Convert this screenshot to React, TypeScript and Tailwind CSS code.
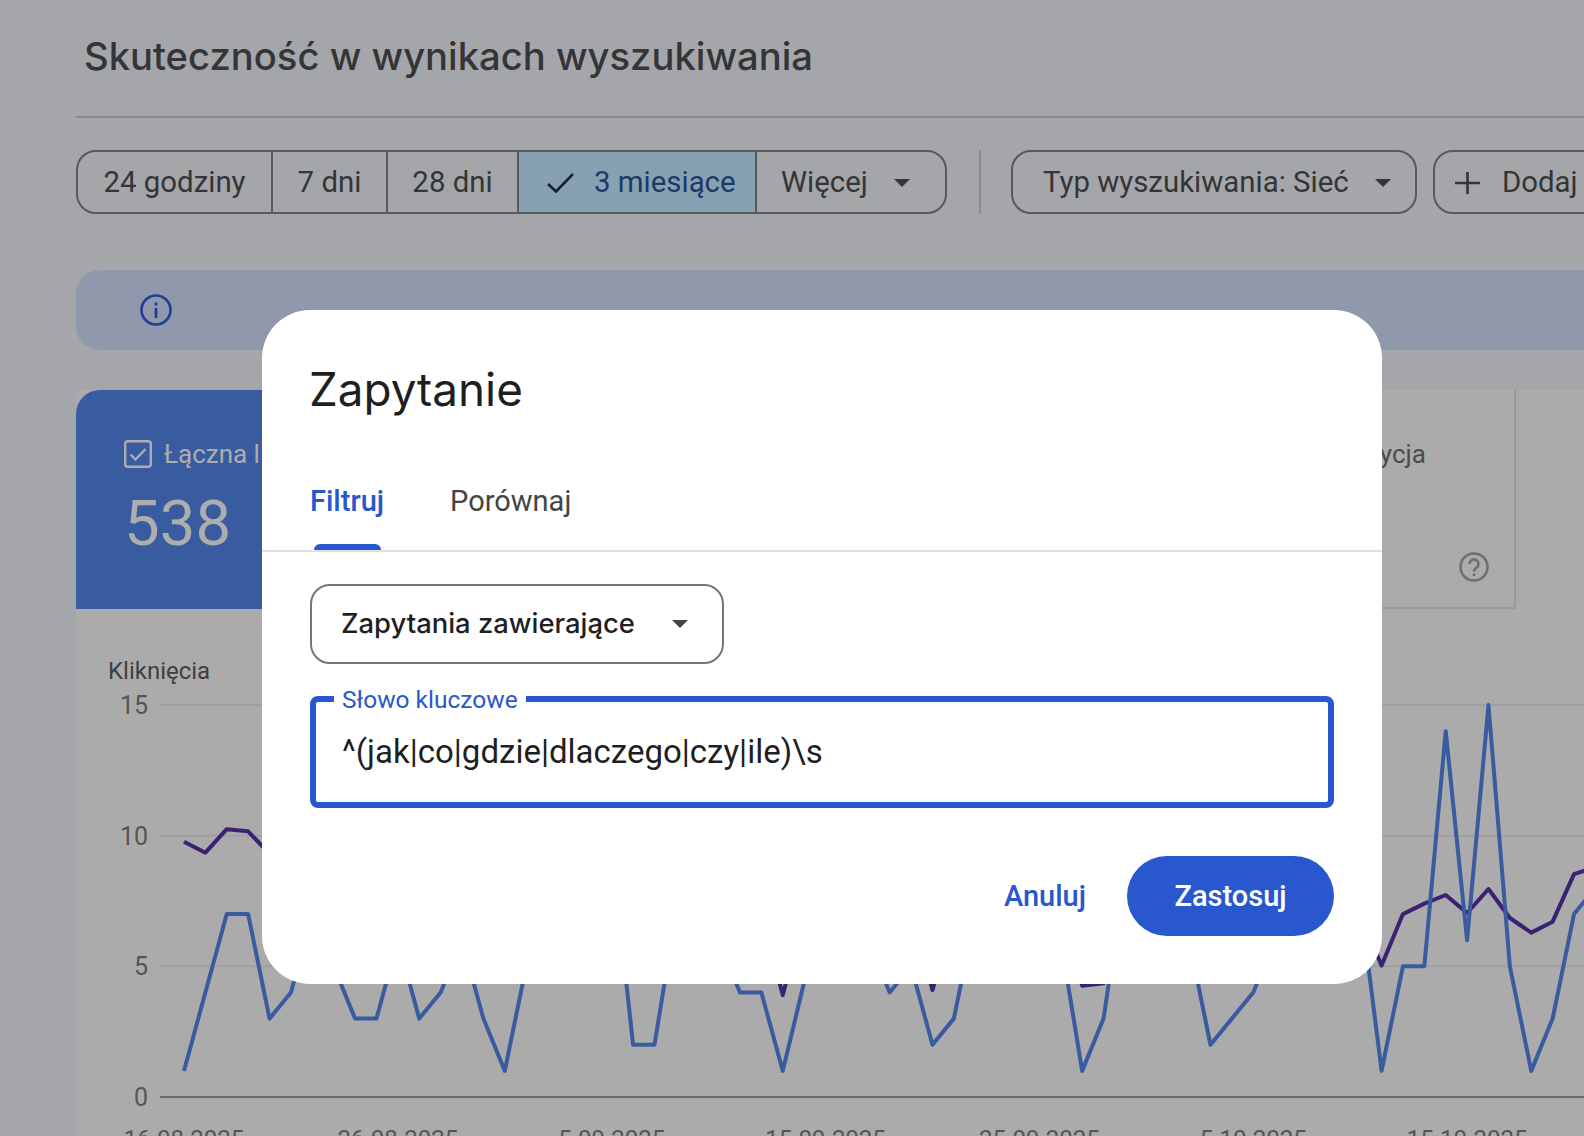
import React from 'react'

const GAP = 21.385
const xAt = (i: number) => 184 + GAP * i
const yAt = (v: number) => 1097 - v * 26.13

const blue = [1, 4, 7, 7, 3, 4, 7, 5, 3, 3, 6, 3, 4, 6, 3, 1, 5, 7, 7, 7, 9.5, 2, 2, 7, 7, 6, 4, 4, 1, 4.4, 7, 7, 6, 4, 5, 2, 3, 7, 7, 7, 7, 6, 1, 3, 8.5, 7, 7, 6, 2, 3, 4, 6, 7, 7, 7, 7.5, 1, 5, 5, 14, 6, 15, 5, 1, 3, 7, 8]
const purple = [9.77, 9.35, 10.25, 10.17, 9.3, 8, 8, 8, 8, 8, 8, 8, 8, 8, 8, 8, 8, 8, 8, 8, 8, 8, 8, 8, 8, 8, 8, 7, 3.9, 7, 8, 8, 8, 8, 7, 4.1, 7, 8, 8, 8, 8, 7, 4.26, 4.35, 7, 8, 8, 8, 8, 8, 8, 8, 8, 8, 8, 7, 5.03, 7, 7.4, 7.73, 7.04, 7.96, 6.85, 6.29, 6.71, 8.53, 8.8]

const points = (values: number[]) => values.map((v, i) => `${xAt(i)},${yAt(v)}`).join(' ')

const yTicks = [15, 10, 5, 0]
const xTicks = [
    { i: 0, label: '16.08.2025' },
    { i: 10, label: '26.08.2025' },
    { i: 20, label: '5.09.2025' },
    { i: 30, label: '15.09.2025' },
    { i: 40, label: '25.09.2025' },
    { i: 50, label: '5.10.2025' },
    { i: 60, label: '15.10.2025' },
]

const Caret = ({ className }: { className: string }) => (
    <svg viewBox="0 0 16 8" className={className}>
        <path d="M0 0h16l-8 8z" fill="currentColor" />
    </svg>
)

const Chart = () => (
    <svg viewBox="76 609 1508 527" className="block h-[527px] w-[1508px]" fontFamily="Roboto, sans-serif">
        <text x="108" y="679" fontSize="24" fill="#3f3f3f">Kliknięcia</text>
        {yTicks.map((t) => (
            <g key={t}>
                <line x1="160" x2="1584" y1={yAt(t)} y2={yAt(t)} stroke={t === 0 ? '#6b6b6b' : '#a0a0a0'} strokeWidth="2" />
                <text x="148" y={yAt(t) + 9} fontSize="25" textAnchor="end" fill="#555555">{t}</text>
            </g>
        ))}
        {xTicks.map((t) => (
            <text key={t.label} x={xAt(t.i)} y="1147" fontSize="24" textAnchor="middle" fill="#555555">{t.label}</text>
        ))}
        <polyline points={points(purple)} fill="none" stroke="#3a2172" strokeWidth="4" strokeLinejoin="round" />
        <polyline points={points(blue)} fill="none" stroke="#395ba0" strokeWidth="4" strokeLinejoin="round" />
    </svg>
)

const segments = [
    { label: '7 dni', w: 'w-[115px]' },
    { label: '28 dni', w: 'w-[131px]' },
]

export default function App() {
    return (
        <div className="relative h-[1136px] w-[1584px] overflow-hidden bg-[#a5a6aa] font-['Roboto',sans-serif]">
            <div className="ml-[76px] h-[118px] border-b-2 border-[#88898b] pl-[8px] pt-[31px]">
                <h1 className="font-['Inter',sans-serif] text-[38.2px] font-medium leading-[50px] text-[#343537]">Skuteczność w wynikach wyszukiwania</h1>
            </div>

            <div className="ml-[76px] mt-[32px] flex h-[64px] items-stretch text-[29.4px] text-[#343537]">
                <div className="flex w-[871px] shrink-0 overflow-hidden rounded-[20px] border-2 border-[#58595b]">
                    <div className="flex w-[193px] items-center justify-center pt-[1px]">24 godziny</div>
                    {segments.map((s) => (
                        <div key={s.label} className={`flex items-center justify-center border-l-2 border-[#58595b] pt-[1px] ${s.w}`}>{s.label}</div>
                    ))}
                    <div className="flex w-[238px] items-center gap-[20px] border-l-2 border-[#58595b] bg-[#87a0b2] pl-[28px] pt-[1px] text-[#1b3a66]">
                        <svg viewBox="0 0 27 20" className="h-[20px] w-[27px]">
                            <path d="M1 11l8 7.5L26 1" fill="none" stroke="#10223c" strokeWidth="2.6" />
                        </svg>
                        3 miesiące
                    </div>
                    <div className="flex flex-1 items-center gap-[26px] border-l-2 border-[#58595b] pl-[24px] pt-[1px]">
                        Więcej
                        <Caret className="h-[8px] w-[16px]" />
                    </div>
                </div>
                <div className="ml-[32px] w-[2px] shrink-0 bg-[#8a8b8d]" />
                <div className="ml-[30px] flex w-[406px] shrink-0 items-center gap-[26px] rounded-[20px] border-2 border-[#58595b] pl-[30px] pt-[1px]">
                    Typ wyszukiwania: Sieć
                    <Caret className="h-[8px] w-[16px]" />
                </div>
                <div className="ml-[16px] flex w-[200px] shrink-0 items-center gap-[22px] rounded-[20px] border-2 border-[#58595b] pl-[20px] pt-[1px]">
                    <svg viewBox="0 0 25 22" className="h-[22px] w-[25px]">
                        <path d="M12.5 0v22M0 11h25" fill="none" stroke="#343537" strokeWidth="2.6" />
                    </svg>
                    Dodaj
                </div>
            </div>

            <div className="ml-[76px] mt-[56px] flex h-[80px] items-center rounded-l-[24px] bg-[#8f99ab] pl-[64px]">
                <svg viewBox="0 0 32 32" className="h-[32px] w-[32px]" fill="none" stroke="#1f3f94">
                    <circle cx="16" cy="16" r="14.5" strokeWidth="2.6" />
                    <path d="M16 14v10" strokeWidth="2.8" />
                    <path d="M16 8.5v3" strokeWidth="2.8" />
                </svg>
            </div>

            <div className="ml-[76px] mt-[40px] bg-[#ababab]">
                <div className="flex h-[219px]">
                    <div className="w-[360px] rounded-tl-[24px] bg-[#395ba0] pl-[48px] pt-[49px] text-[#adadad]">
                        <div className="flex items-center gap-[12px] text-[26px] leading-[30px]">
                            <svg viewBox="0 0 28 28" className="h-[28px] w-[28px]" fill="none" stroke="#adadad" strokeWidth="2.4">
                                <rect x="1.2" y="1.2" width="25.6" height="25.6" rx="2.5" />
                                <path d="M6.5 14.5l5 5 10-10.5" />
                            </svg>
                            Łączna liczba
                        </div>
                        <div className="mt-[17px] text-[63.5px] leading-[76px]">538</div>
                    </div>
                    <div className="w-[720px]" />
                    <div className="relative w-[360px] border-b-2 border-r-2 border-[#9a9a9a] pl-[88px] pt-[49px] text-[#4b4b4b]">
                        <div className="text-[26px] leading-[30px]">Średnia pozycja</div>
                        <svg viewBox="0 0 30 30" className="absolute right-[25px] top-[162px] h-[30px] w-[30px]" fill="none" stroke="#6f6f6f">
                            <circle cx="15" cy="15" r="13.5" strokeWidth="2.6" />
                            <path d="M10.5 12a4.5 4.5 0 1 1 7 3.7c-1.6 1.1-2.5 2-2.5 3.8" strokeWidth="2.6" />
                            <path d="M15 21.5v2.6" strokeWidth="2.6" />
                        </svg>
                    </div>
                </div>
                <Chart />
            </div>

            <div className="absolute left-[262px] top-[310px] h-[674px] w-[1120px] rounded-[48px] bg-white">
                <h2 className="pl-[47px] pt-[50px] font-['Inter',sans-serif] text-[45.8px] leading-[60px] text-[#1f1f1f]">Zapytanie</h2>
                <div className="mt-[34px] flex h-[98px] items-start gap-[66px] border-b-2 border-[#e0e0e0] pl-[48px] text-[29px] leading-[40px]">
                    <div className="relative h-[96px] pt-[27px] font-medium leading-[40px] text-[#2957cd]">
                        Filtruj
                        <div className="absolute bottom-0 left-[4px] h-[6px] w-[67px] rounded-t-[6px] bg-[#2957cd]" />
                    </div>
                    <div className="pt-[27px] text-[#444444]">Porównaj</div>
                </div>
                <div className="ml-[48px] mt-[32px] flex h-[80px] w-[414px] items-center justify-between rounded-[20px] border-2 border-[#757575] pl-[29px] pr-[34px] font-['Inter',sans-serif] text-[27.4px] font-medium text-[#1f1f1f]">
                    Zapytania zawierające
                    <Caret className="h-[8px] w-[16px] text-[#444444]" />
                </div>
                <div className="relative ml-[48px] mt-[32px] flex h-[112px] w-[1024px] items-center rounded-[8px] border-[6px] border-[#2957cd] pl-[26px] text-[33px] text-[#1f1f1f]">
                    ^(jak|co|gdzie|dlaczego|czy|ile)\s
                    <span className="absolute left-[18px] top-[-16px] bg-white px-[8px] text-[24.5px] leading-[28px] text-[#2957cd]">Słowo kluczowe</span>
                </div>
                <div className="mr-[48px] mt-[48px] flex items-center justify-end gap-[41px] text-[29px] font-medium">
                    <span className="pt-[2px] text-[#2957cd]">Anuluj</span>
                    <span className="flex h-[80px] w-[207px] items-center justify-center rounded-full bg-[#2957cd] pt-[2px] text-white">Zastosuj</span>
                </div>
            </div>
        </div>
    )
}
